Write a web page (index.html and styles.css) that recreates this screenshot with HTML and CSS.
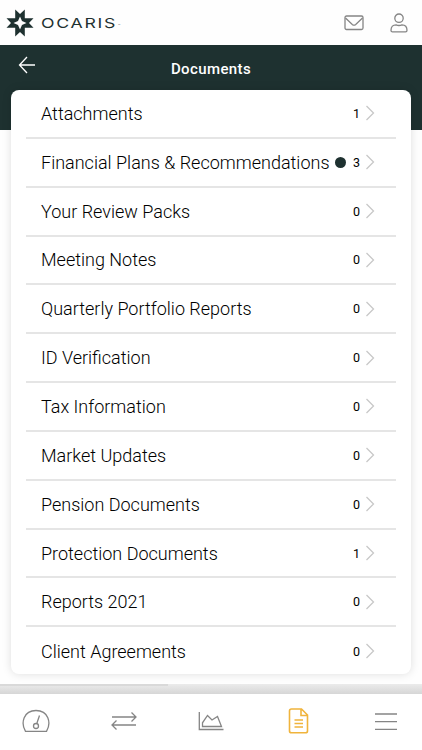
FILE: index.html
```
<!DOCTYPE html>
<html lang="en">
<head>
    <meta charset="UTF-8">
    <meta name="viewport" content="width=device-width, initial-scale=1.0">
    <title>Documents</title>
    <link rel="stylesheet" href="styles.css">
</head>
<body>
    <header class="topbar">
        <svg class="star" viewBox="0 0 28 28">
            <path fill="#1e3130" fill-rule="evenodd" d="M9.2 0.5 L14 5 L18.8 0.5 V9.2 H27.5 L23 14 L27.5 18.8 H18.8 V27.5 L14 23 L9.2 27.5 V18.8 H0.5 L5 14 L0.5 9.2 H9.2 Z M14 7.5 L12 12 L7.5 14 L12 16 L14 20.5 L16 16 L20.5 14 L16 12 Z"/>
        </svg>
        <span class="brand">OCARIS</span><span class="tm">™</span>
        <svg class="mail" viewBox="0 0 20 16">
            <rect x="1" y="1" width="18" height="13.5" rx="1.5"/>
            <path d="M1.5 3 L8.3 9.4 Q10 10.8 11.7 9.4 L18.5 3"/>
        </svg>
        <svg class="user" viewBox="0 0 18 20">
            <circle cx="9" cy="5.2" r="4.2"/>
            <path d="M1 17.2 C1 13.5 3 11.8 6 11.8 Q9 13.2 12 11.8 C15 11.8 17 13.5 17 17.2 Q17 18.8 15.5 18.8 H2.5 Q1 18.8 1 17.2 Z"/>
        </svg>
    </header>

    <div class="titlebar">
        <svg class="back" viewBox="0 0 18 18">
            <path d="M9 1 L1.5 9 L9 17 M1.5 9 H17"/>
        </svg>
        <h1>Documents</h1>
    </div>

    <main class="content">
        <ul class="card" id="folders"></ul>
    </main>

    <div class="scroll"><div class="thumb"></div></div>

    <nav class="tabs">
        <svg viewBox="0 0 28 24">
            <path d="M3.5 22.3 C-1.5 14 1.5 1.5 14 1.5 C26.5 1.5 29.5 14 24.5 22.3 Z"/>
            <circle cx="14" cy="17" r="2.5"/>
            <path d="M14.8 14.5 L17.5 6.5"/>
        </svg>
        <svg viewBox="0 0 28 24">
            <path d="M2 8 H26 M21.5 3.5 L26 8 L21.5 12.5 M26 16 H2 M6.5 11.5 L2 16 L6.5 20.5"/>
        </svg>
        <svg viewBox="0 0 28 24">
            <path d="M2.3 3 V20.5 H26.5"/>
            <path d="M5.5 17.5 V13.8 L10.5 6.5 L15 11 L20.5 7.5 L24.5 17.5 Z"/>
        </svg>
        <svg class="active" viewBox="0 0 28 28">
            <path d="M6.5 2 H16.5 L22.5 8 V24 Q22.5 25.8 20.5 25.8 H6.5 Q4.5 25.8 4.5 24 V4 Q4.5 2 6.5 2 Z M16 2 V8.5 H22.5 M9.5 13 H18 M9.5 16.5 H18 M9.5 20 H18"/>
        </svg>
        <svg viewBox="0 0 28 24">
            <path d="M3 5 H25 M3 12.7 H25 M3 20.3 H25"/>
        </svg>
    </nav>

    <script>
        const folders = [
            { name: "Attachments", count: 1 },
            { name: "Financial Plans & Recommendations", count: 3, unread: true },
            { name: "Your Review Packs", count: 0 },
            { name: "Meeting Notes", count: 0 },
            { name: "Quarterly Portfolio Reports", count: 0 },
            { name: "ID Verification", count: 0 },
            { name: "Tax Information", count: 0 },
            { name: "Market Updates", count: 0 },
            { name: "Pension Documents", count: 0 },
            { name: "Protection Documents", count: 1 },
            { name: "Reports 2021", count: 0 },
            { name: "Client Agreements", count: 0 }
        ];

        const list = document.getElementById("folders");
        folders.forEach((folder) => {
            const row = document.createElement("li");
            const name = document.createElement("span");
            name.className = "name";
            name.textContent = folder.name;
            row.appendChild(name);

            // Dot for folders with unread documents
            if (folder.unread) {
                const dot = document.createElement("span");
                dot.className = "dot";
                row.appendChild(dot);
            }

            const count = document.createElement("span");
            count.className = "count";
            count.textContent = folder.count;
            row.appendChild(count);
            row.insertAdjacentHTML("beforeend", '<svg class="chevron" viewBox="0 0 10 16"><path d="M1.5 1 L8.5 8 L1.5 15"/></svg>');
            list.appendChild(row);
        });
    </script>
</body>
</html>
```
FILE: styles.css
```
* {
    box-sizing: border-box;
}

body {
    margin: 0;
    height: 750px;
    display: flex;
    flex-direction: column;
    overflow: hidden;
    background: #fefefe;
    color: #000;
    font-family: Roboto, "Liberation Sans", sans-serif;
}

svg {
    fill: none;
    stroke: #858585;
    stroke-width: 1.3;
    flex: none;
}

/* Top bar */
.topbar {
    display: flex;
    align-items: center;
    height: 45px;
    padding: 0 14px 0 6px;
}

.star {
    width: 28px;
    height: 28px;
    stroke: none;
}

.brand {
    width: 77px;
    margin-left: 7px;
    font-family: Inter, sans-serif;
    font-size: 13.5px;
    letter-spacing: 1.3px;
    transform: scaleX(1.31);
    transform-origin: left;
    color: #1e3130;
}

.tm {
    margin-top: 6px;
    font-size: 4px;
    color: #777;
}

.mail {
    width: 20px;
    height: 16px;
    margin-left: auto;
    margin-right: 26px;
}

.user {
    width: 18px;
    height: 20px;
}

/* Title */
.titlebar {
    display: flex;
    height: 85px;
    padding: 11px 18px 0;
    background: #1e3130;
}

.back {
    width: 18px;
    height: 18px;
    stroke: #fff;
}

h1 {
    flex: 1;
    margin: 3px 18px 0 0;
    text-align: center;
    font-size: 15px;
    line-height: 20px;
    font-weight: 500;
    letter-spacing: 0.4px;
    color: #fff;
}

/* Folder list */
.content {
    height: 554px;
    padding: 0 11px;
}

.card {
    position: relative;
    margin: -40px 0 0;
    height: 584px;
    padding: 0 15px;
    list-style: none;
    background: #fff;
    border-radius: 8px;
    box-shadow: 0 0 10px rgba(0, 0, 0, 0.13);
}

.card li {
    display: flex;
    align-items: center;
    height: 48.85px;
    padding: 0 21px 0 15px;
    border-bottom: 2px solid #e5e5e5;
}

.card li:last-child {
    border-bottom: 0;
    padding-bottom: 1px;
}

.name {
    font-size: 18px;
    font-weight: 340;
    white-space: nowrap;
}

.dot {
    width: 11px;
    height: 11px;
    margin-left: 5px;
    border-radius: 50%;
    background: #1e3130;
}

.count {
    margin-left: auto;
    font-size: 12.5px;
}

.chevron {
    width: 10px;
    height: 16px;
    margin-left: 5px;
    stroke: #c8c8c8;
}

/* Horizontal scrollbar */
.scroll {
    height: 10px;
    background: linear-gradient(#ebebeb, #d6d6d6);
}

.thumb {
    width: 168px;
    height: 2px;
    background: #d9d9d9;
}

/* Bottom tabs */
.tabs {
    display: flex;
    flex: 1;
    justify-content: space-between;
    padding: 15px 22px 0;
    background: #fff;
}

.tabs svg {
    width: 28px;
    height: 24px;
}

.tabs .active {
    height: 28px;
    margin-top: -2px;
    stroke: #f0b43c;
    stroke-width: 1.6;
}
```
